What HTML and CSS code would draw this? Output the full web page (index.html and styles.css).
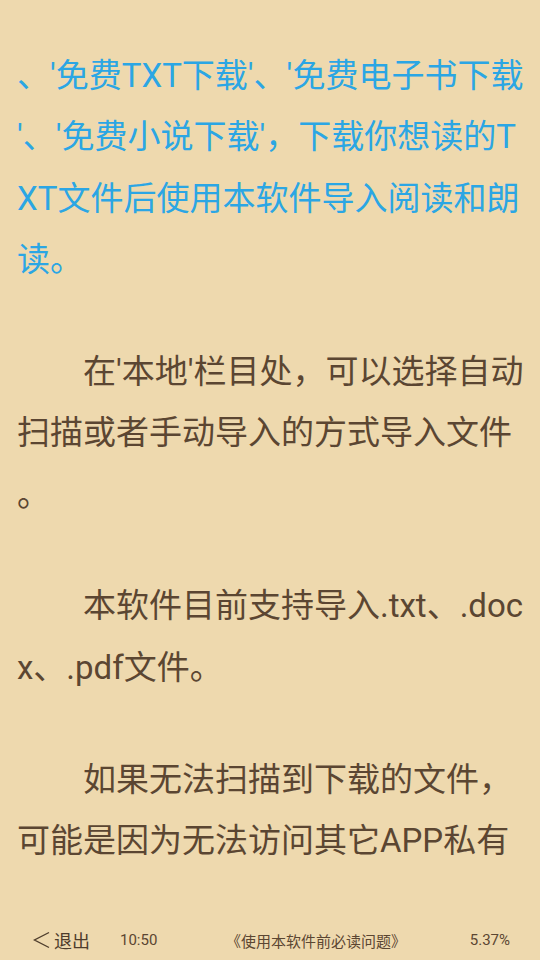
FILE: index.html
```html
<!DOCTYPE html>
<html lang="zh">
<head>
    <meta charset="UTF-8">
    <meta name="viewport" content="width=device-width, initial-scale=1.0">
    <title>阅读</title>
    <link rel="stylesheet" href="styles.css">
</head>
<body>
    <div class="reader">
        <div class="page">
            <div class="para link">
                <div class="line">、'免费TXT下载'、'免费电子书下载</div>
                <div class="line">'、'免费小说下载'，下载你想读的T</div>
                <div class="line">XT文件后使用本软件导入阅读和朗</div>
                <div class="line">读。</div>
            </div>
            <div class="para">
                <div class="line indent">在'本地'栏目处，可以选择自动</div>
                <div class="line">扫描或者手动导入的方式导入文件</div>
                <div class="line">。</div>
            </div>
            <div class="para">
                <div class="line indent">本软件目前支持导入.txt、.doc</div>
                <div class="line">x、.pdf文件。</div>
            </div>
            <div class="para">
                <div class="line indent">如果无法扫描到下载的文件，</div>
                <div class="line">可能是因为无法访问其它APP私有</div>
            </div>
        </div>
        <div class="status-bar">
            <span class="back">
                <svg class="chevron" width="17" height="18" viewBox="0 0 17 18">
                    <polyline points="16,1.5 1.5,9 16,16.5" fill="none" stroke="#4e3d2c" stroke-width="1.4"/>
                </svg>
                退出
            </span>
            <span class="time">10:50</span>
            <span class="book">《使用本软件前必读问题》</span>
            <span class="progress">5.37%</span>
        </div>
    </div>
</body>
</html>
```
FILE: styles.css
```css
/* BODY */
html, body {
    margin: 0;
    padding: 0;
}
body {
    background-color: #eed9ae;
    font-family: Roboto, "Noto Sans CJK SC", sans-serif;
    color: #5b4632;
}

/* Reader layout */
.reader {
    height: 960px;
    display: flex;
    flex-direction: column;
}
.page {
    flex: 1;
    padding: 45px 0 0 17px;
    overflow: hidden;
}

/* Paragraphs */
.para {
    margin-bottom: 50.6px;
}
.line {
    font-size: 33px;
    line-height: 61.33px;
    height: 61.33px;
    white-space: nowrap;
}
.line.indent {
    padding-left: 66px;
}
.link {
    color: #2ba6e4;
}

/* Bottom status bar */
.status-bar {
    height: 40px;
    display: flex;
    align-items: center;
    padding: 2px 30px 0 33px;
    font-size: 15px;
    color: #5b4632;
}
.status-bar .back {
    display: flex;
    align-items: center;
    gap: 4px;
    font-size: 18px;
    width: 87px;
    color: #4e3d2c;
}
.status-bar .time {
    width: 106px;
}
.status-bar .book {
    flex: 1;
    font-size: 15px;
}
.status-bar .progress {
    text-align: right;
}
```
